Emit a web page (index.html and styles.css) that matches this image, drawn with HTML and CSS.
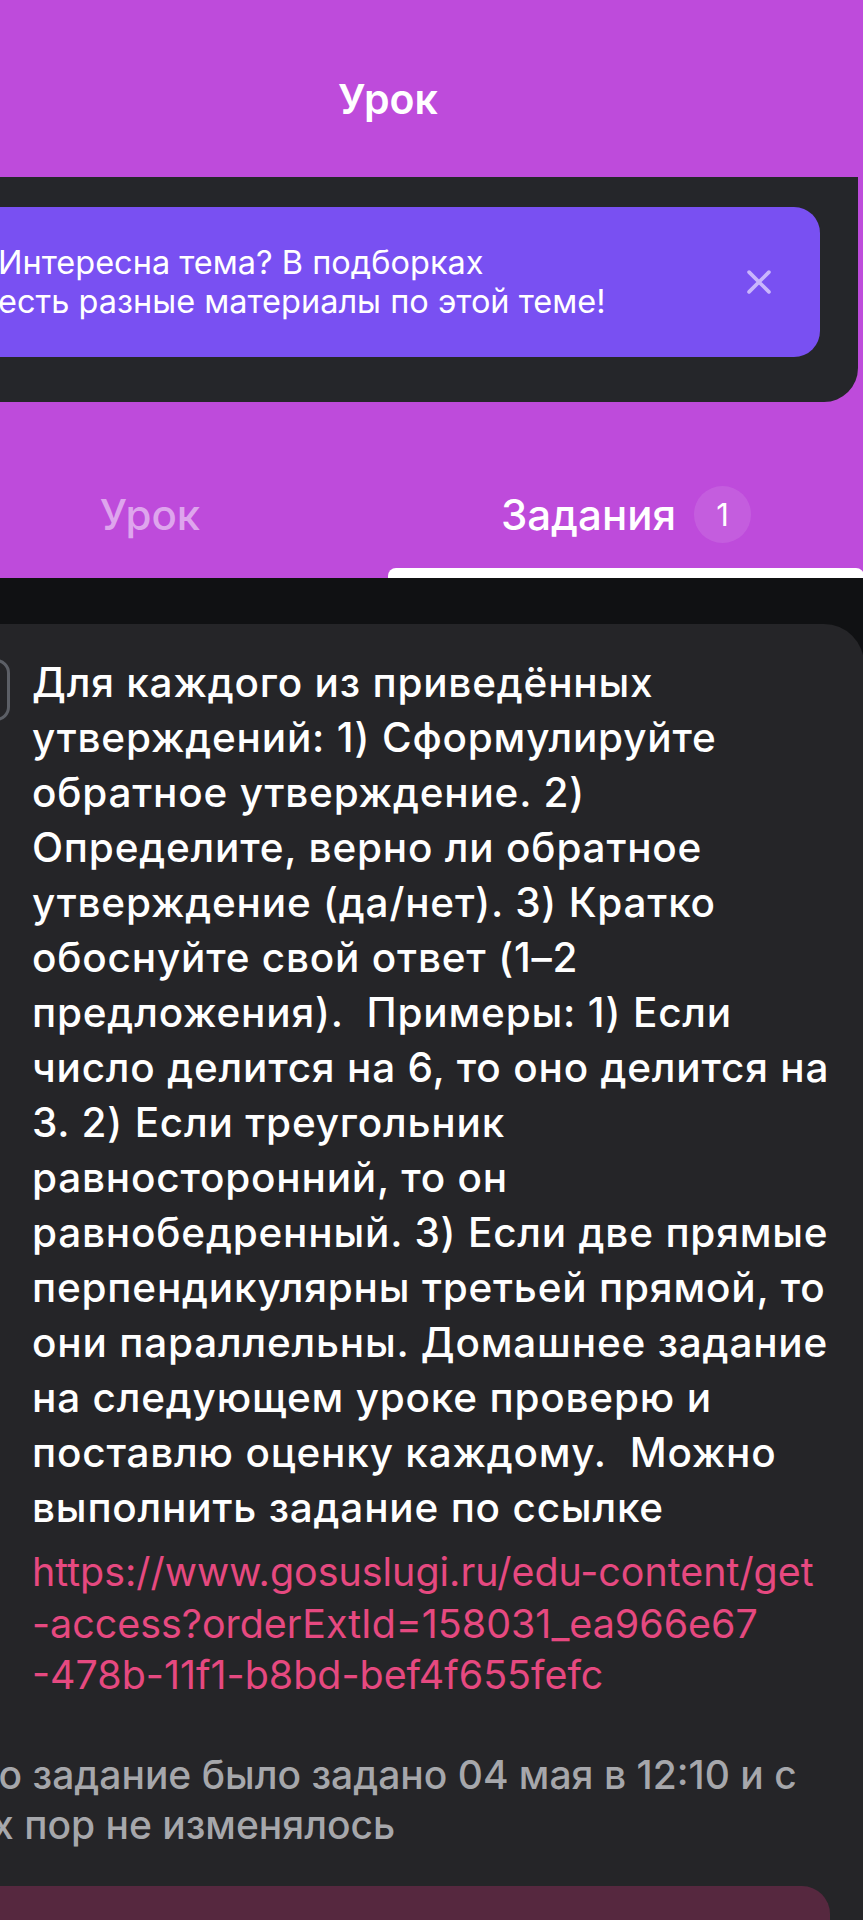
FILE: index.html
```html
<!DOCTYPE html>
<html lang="ru">
<head>
  <meta charset="UTF-8" />
  <meta name="viewport" content="width=device-width, initial-scale=1" />
  <title>Урок</title>
  <link rel="stylesheet" href="styles.css">
</head>
<body>
  <div class="page">
    <div class="hero">
      <header class="topbar">
        <h1>Урок</h1>
      </header>

      <section class="promo-box">
        <div class="promo">
          <p>Интересна тема? В подборках<br>есть разные материалы по этой теме!</p>
          <button type="button" class="promo-close" aria-label="Закрыть">
            <svg viewBox="0 0 24 24" width="34" height="34" fill="none" stroke="currentColor" stroke-width="2.6" stroke-linecap="round">
              <path d="M5 5l14 14M19 5L5 19" />
            </svg>
          </button>
        </div>
      </section>

      <nav class="tabs">
        <div class="tab">Урок</div>
        <div class="tab active">Задания <span class="badge">1</span></div>
      </nav>
    </div>

    <main class="content">
      <div class="task-card">
        <div class="task">
          <span class="check"></span>
          <div class="task-body">
            <p class="task-text">Для каждого из приведённых<br>утверждений: 1) Сформулируйте<br>обратное утверждение. 2)<br>Определите, верно ли обратное<br>утверждение (да/нет). 3) Кратко<br>обоснуйте свой ответ (1–2<br>предложения).  Примеры: 1) Если<br>число делится на 6, то оно делится на<br>3. 2) Если треугольник<br>равносторонний, то он<br>равнобедренный. 3) Если две прямые<br>перпендикулярны третьей прямой, то<br>они параллельны. Домашнее задание<br>на следующем уроке проверю и<br>поставлю оценку каждому.  Можно<br>выполнить задание по ссылке</p>
            <a class="task-link" href="#">https://www.gosuslugi.ru/edu-content/get<br>-access?orderExtId=158031_ea966e67<br>-478b-11f1-b8bd-bef4f655fefc</a>
          </div>
        </div>

        <p class="task-note">Это задание было задано 04 мая в 12:10 и с<br>тех пор не изменялось</p>

        <div class="task-action"></div>
      </div>
    </main>
  </div>
</body>
</html>
```

FILE: styles.css
```css
* {
  margin: 0;
  padding: 0;
  box-sizing: border-box;
  font-family: 'Inter', 'Noto Sans', sans-serif;
}

html,
body {
  background: #101113;
  overflow: hidden;
}

/* the page is wider than the screen and scrolled a bit to the right */
.page {
  width: 952px;
  margin-left: -88px;
}

.hero {
  background: #be4bdb;
}

.topbar {
  height: 177px;
  display: flex;
  justify-content: center;
  align-items: center;
  padding-top: 22px;
}

.topbar h1 {
  color: #fff;
  font-size: 41px;
  font-weight: 600;
  line-height: 1;
}

.promo-box {
  background: #25262a;
  margin-right: 6px;
  border-radius: 0 0 34px 34px;
  padding: 30px 38px 45px 40px;
}

.promo {
  background: #7950f2;
  border-radius: 26px;
  height: 150px;
  display: flex;
  align-items: center;
  justify-content: space-between;
  padding: 0 44px 0 46px;
}

.promo p {
  color: #fff;
  font-size: 32.5px;
  line-height: 39px;
  font-weight: 400;
}

.promo-close {
  background: none;
  border: none;
  color: #c9b6fc;
  display: flex;
  cursor: pointer;
}

.tabs {
  display: flex;
  height: 176px;
}

.tab {
  flex: 1;
  display: flex;
  justify-content: center;
  align-items: center;
  padding-top: 48px;
  font-size: 42px;
  font-weight: 500;
  color: #dea5ed;
  position: relative;
}

.tab.active {
  color: #fff;
  gap: 18px;
}

.tab.active::after {
  content: '';
  position: absolute;
  left: 0;
  right: 0;
  bottom: 0;
  height: 10px;
  background: #fff;
  border-radius: 8px 8px 0 0;
}

.badge {
  width: 57px;
  height: 57px;
  border-radius: 50%;
  background: rgba(255, 255, 255, 0.1);
  display: flex;
  justify-content: center;
  align-items: center;
  font-size: 31px;
  font-weight: 400;
}

.content {
  background: #101113;
  padding-top: 46px;
}

.task-card {
  background: #252528;
  border-radius: 40px 40px 0 0;
  padding: 31px 0 0 40px;
  min-height: 1400px;
}

.task {
  display: flex;
  gap: 22px;
}

.check {
  flex: none;
  width: 58px;
  height: 62px;
  margin-top: 4px;
  border: 3px solid #5c5f66;
  border-radius: 14px;
}

.task-text {
  color: #fff;
  font-size: 40.5px;
  line-height: 55px;
  font-weight: 500;
  letter-spacing: 0.8px;
  white-space: pre-wrap;
}

.task-link {
  display: block;
  margin-top: 12px;
  color: #e64980;
  font-size: 39.4px;
  line-height: 51.5px;
  text-decoration: none;
}

.task-note {
  margin-top: 48px;
  color: #a6a7ab;
  font-size: 39px;
  line-height: 50px;
  font-weight: 500;
}

.task-action {
  margin-top: 36px;
  margin-right: 34px;
  height: 120px;
  background: #56283f;
  border-radius: 0 28px 0 0;
}
```
